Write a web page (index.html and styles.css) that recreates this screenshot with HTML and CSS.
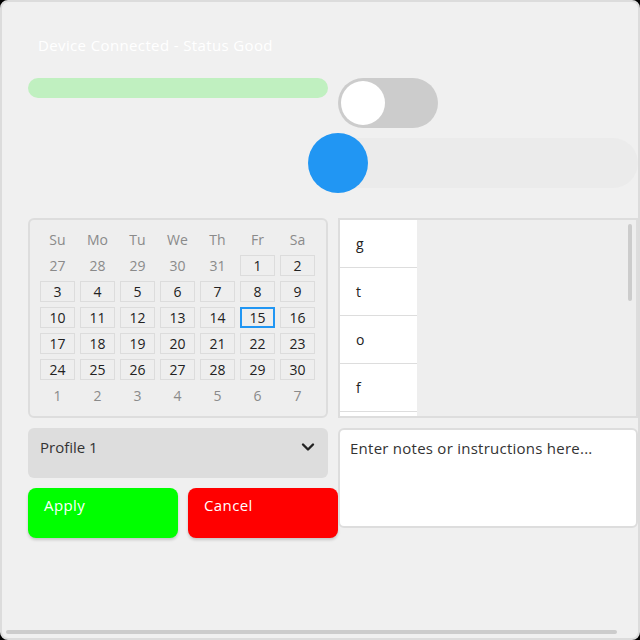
FILE: index.html
```html
<!DOCTYPE html>
<html>
<head>
<meta charset="utf-8">
<link rel="stylesheet" href="styles.css">
</head>
<body>
<div class="screen">
  <div class="status">Device Connected - Status Good</div>
  <div class="row-top">
    <div class="bar"></div>
    <div class="switch"><div class="switch-knob"></div></div>
  </div>
  <div class="slider">
    <div class="slider-track"></div>
    <div class="slider-knob"></div>
  </div>
  <div class="row-mid">
    <div class="calendar">
      <div class="cal-grid">
        <span class="cal-head">Su</span><span class="cal-head">Mo</span><span class="cal-head">Tu</span><span class="cal-head">We</span><span class="cal-head">Th</span><span class="cal-head">Fr</span><span class="cal-head">Sa</span>
        <span class="cal-other">27</span><span class="cal-other">28</span><span class="cal-other">29</span><span class="cal-other">30</span><span class="cal-other">31</span><span class="cal-day">1</span><span class="cal-day">2</span>
        <span class="cal-day">3</span><span class="cal-day">4</span><span class="cal-day">5</span><span class="cal-day">6</span><span class="cal-day">7</span><span class="cal-day">8</span><span class="cal-day">9</span>
        <span class="cal-day">10</span><span class="cal-day">11</span><span class="cal-day">12</span><span class="cal-day">13</span><span class="cal-day">14</span><span class="cal-day cal-today">15</span><span class="cal-day">16</span>
        <span class="cal-day">17</span><span class="cal-day">18</span><span class="cal-day">19</span><span class="cal-day">20</span><span class="cal-day">21</span><span class="cal-day">22</span><span class="cal-day">23</span>
        <span class="cal-day">24</span><span class="cal-day">25</span><span class="cal-day">26</span><span class="cal-day">27</span><span class="cal-day">28</span><span class="cal-day">29</span><span class="cal-day">30</span>
        <span class="cal-other">1</span><span class="cal-other">2</span><span class="cal-other">3</span><span class="cal-other">4</span><span class="cal-other">5</span><span class="cal-other">6</span><span class="cal-other">7</span>
      </div>
    </div>
    <div class="list">
      <div class="list-items">
        <div class="list-item">g</div>
        <div class="list-item">t</div>
        <div class="list-item">o</div>
        <div class="list-item">f</div>
        <div class="list-item"></div>
      </div>
      <div class="list-scroll"></div>
    </div>
  </div>
  <div class="row-bottom">
    <div class="col-left">
      <div class="dropdown">
        <span>Profile 1</span>
        <svg class="chev" width="14" height="10" viewBox="0 0 14 10"><path d="M2 2.5 L7 7.5 L12 2.5" fill="none" stroke="#222" stroke-width="2.4" stroke-linecap="round" stroke-linejoin="round"/></svg>
      </div>
      <div class="buttons">
        <div class="btn btn-apply">Apply</div>
        <div class="btn btn-cancel">Cancel</div>
      </div>
    </div>
    <div class="notes">Enter notes or instructions here...</div>
  </div>
  <div class="hscroll"></div>
</div>
</body>
</html>
```
FILE: styles.css
```css
html, body {
  margin: 0;
  padding: 0;
  background: #000;
}
.screen {
  position: relative;
  box-sizing: border-box;
  width: 640px;
  height: 640px;
  background: #f0f0f0;
  border: 2px solid #dcdcdc;
  border-radius: 8px;
  padding: 33px 0 0 26px;
  overflow: hidden;
  font-family: "Open Sans", sans-serif;
  font-size: 15px;
  color: #222;
  display: flex;
  flex-direction: column;
}
.status {
  color: #ffffff;
  margin-left: 10px;
  height: 20px;
  line-height: 20px;
  font-size: 15px;
  letter-spacing: 0.37px;
}
.row-top {
  display: flex;
  gap: 10px;
  margin-top: 23px;
}
.bar {
  width: 300px;
  height: 20px;
  border-radius: 10px;
  background: #c0f0c0;
}
.switch {
  box-sizing: border-box;
  width: 100px;
  height: 50px;
  border-radius: 25px;
  background: #cccccc;
  padding: 3px;
}
.switch-knob {
  width: 44px;
  height: 44px;
  border-radius: 50%;
  background: #ffffff;
}
.slider {
  position: relative;
  width: 330px;
  height: 60px;
  margin-left: 280px;
  margin-top: 5px;
  display: flex;
  align-items: center;
}
.slider-track {
  width: 100%;
  height: 50px;
  margin-left: 5px;
  border-radius: 25px;
  background: #ebebeb;
}
.slider-knob {
  position: absolute;
  left: 0;
  top: 0;
  width: 60px;
  height: 60px;
  border-radius: 50%;
  background: #2196f3;
}
.row-mid {
  display: flex;
  gap: 10px;
  margin-top: 25px;
}
.calendar {
  box-sizing: border-box;
  width: 300px;
  height: 200px;
  border: 2px solid #dddddd;
  border-radius: 6px;
  background: #eeeeee;
  padding: 9px 0 0 10px;
}
.cal-grid {
  display: grid;
  grid-template-columns: repeat(7, 35px);
  grid-auto-rows: 21px;
  column-gap: 5px;
  row-gap: 5px;
}
.cal-grid span {
  box-sizing: border-box;
  display: flex;
  align-items: center;
  justify-content: center;
  font-size: 14px;
  line-height: 1;
}
.cal-head, .cal-other {
  color: #8a8a8a;
}
.cal-day {
  border: 1px solid #dcdcdc;
  color: #222;
}
.cal-today {
  border: 2px solid #2196f3;
}
.list {
  position: relative;
  box-sizing: border-box;
  width: 300px;
  height: 200px;
  border: 2px solid #dddddd;
  background: #eeeeee;
  overflow: hidden;
}
.list-items {
  width: 77px;
  display: flex;
  flex-direction: column;
}
.list-item {
  box-sizing: border-box;
  height: 48px;
  flex-shrink: 0;
  background: #ffffff;
  border-bottom: 1px solid #dddddd;
  padding-left: 16px;
  display: flex;
  align-items: center;
  font-size: 14px;
  color: #222;
}
.list-scroll {
  position: absolute;
  right: 4px;
  top: 4px;
  width: 4px;
  height: 77px;
  border-radius: 2px;
  background: #cccccc;
}
.row-bottom {
  display: flex;
  margin-top: 10px;
  align-items: flex-start;
}
.col-left {
  width: 310px;
  display: flex;
  flex-direction: column;
  gap: 10px;
}
.dropdown {
  box-sizing: border-box;
  width: 300px;
  height: 50px;
  border-radius: 6px;
  background: #dddddd;
  padding: 9px 12px 0 12px;
  display: flex;
  justify-content: space-between;
  align-items: flex-start;
  color: #333;
  font-size: 15px;
  line-height: 20px;
}
.chev {
  margin-top: 5px;
  margin-right: 1px;
}
.buttons {
  display: flex;
  gap: 10px;
}
.btn {
  box-sizing: border-box;
  width: 150px;
  height: 50px;
  border-radius: 8px;
  padding: 7px 16px 0 16px;
  color: #ffffff;
  font-size: 15px;
  line-height: 20px;
  letter-spacing: 0.4px;
  box-shadow: 0 2px 3px rgba(0, 0, 0, 0.18);
}
.btn-apply {
  background: #00ff00;
}
.btn-cancel {
  background: #ff0000;
}
.notes {
  box-sizing: border-box;
  width: 300px;
  height: 100px;
  background: #ffffff;
  border: 2px solid #dddddd;
  border-radius: 6px;
  padding: 8px 10px;
  color: #333;
  font-size: 15px;
  line-height: 20px;
  letter-spacing: 0.25px;
}
.hscroll {
  position: absolute;
  left: 4px;
  bottom: 4px;
  width: 611px;
  height: 4px;
  border-radius: 2px;
  background: #cccccc;
}
```
